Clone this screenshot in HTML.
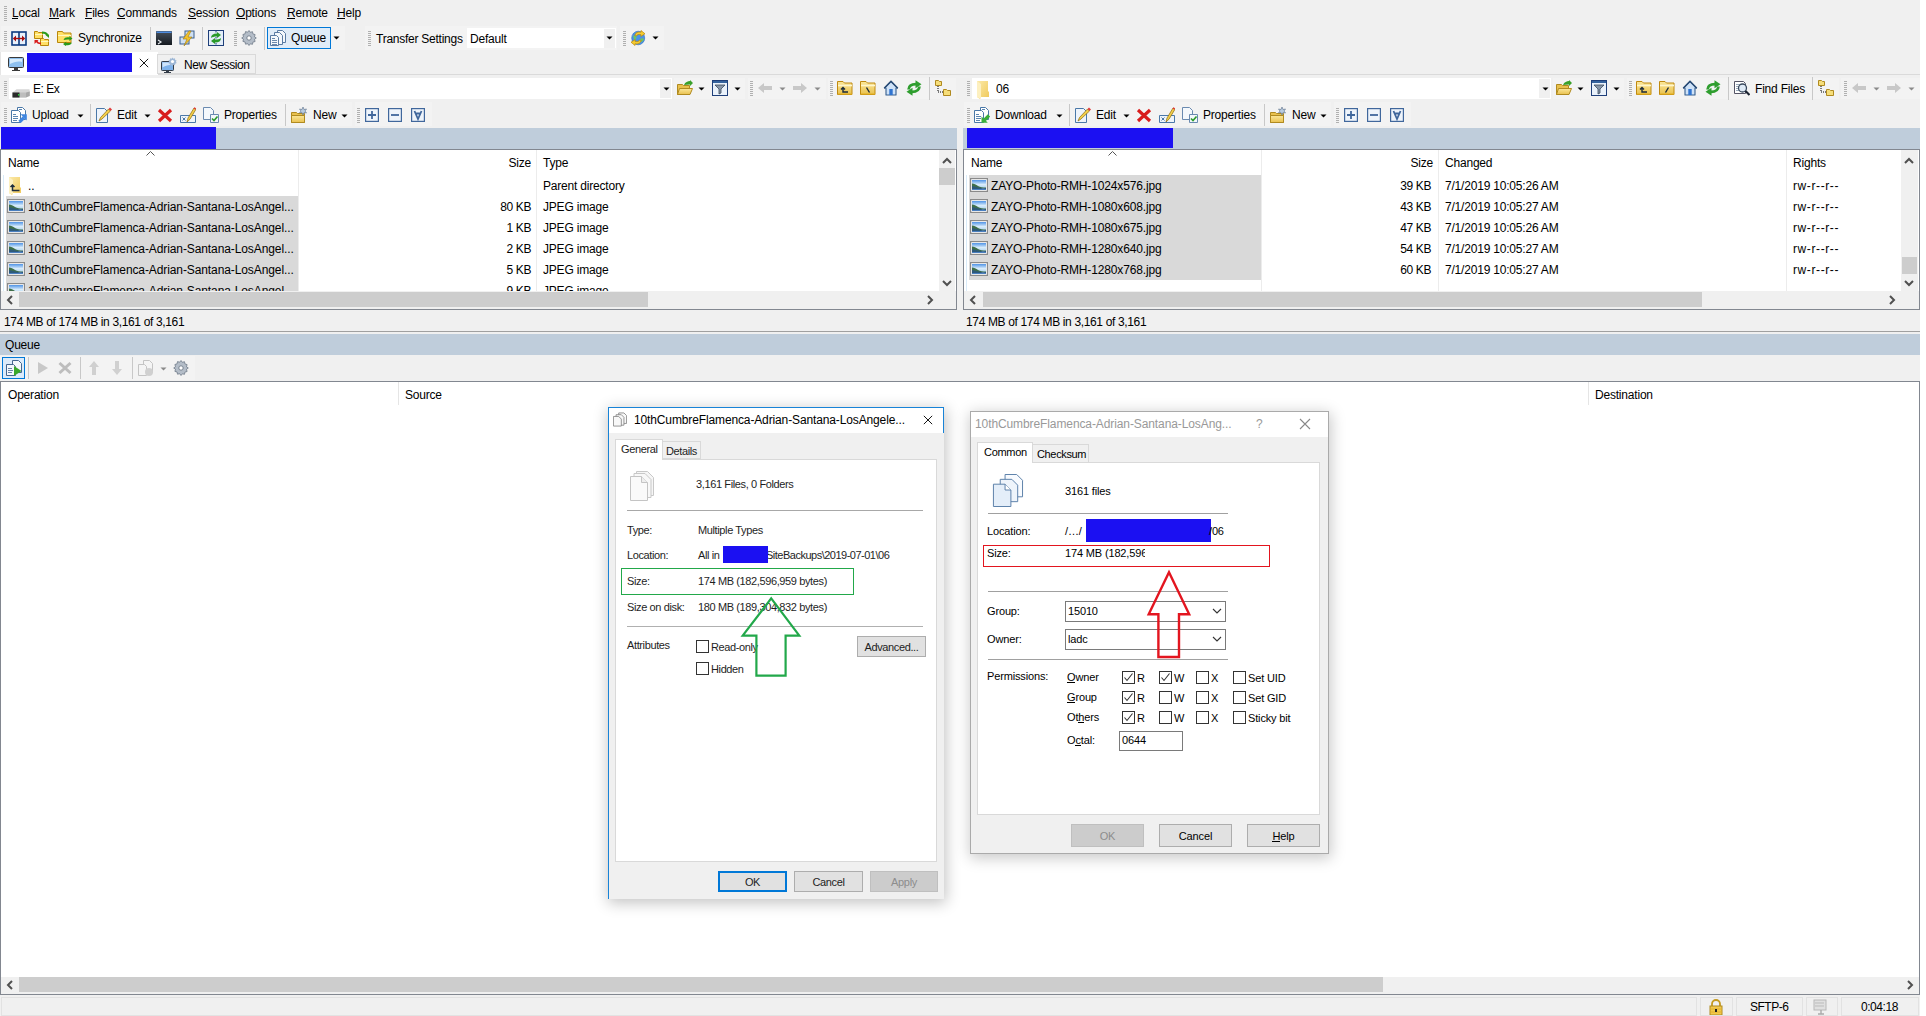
<!DOCTYPE html>
<html><head><meta charset="utf-8"><title>WinSCP</title>
<style>
html,body{margin:0;padding:0;}
body{width:1926px;height:1016px;position:relative;overflow:hidden;background:#fff;font-family:"Liberation Sans",sans-serif;font-size:12px;color:#000;}
.a{position:absolute;}
.t{position:absolute;white-space:nowrap;line-height:14px;}
u{text-decoration:none;border-bottom:1px solid currentColor;line-height:10px;display:inline-block;}
svg.a{overflow:visible;}
</style></head><body>
<svg width="0" height="0" style="position:absolute">
<defs>
<linearGradient id="gy" x1="0" y1="0" x2="0" y2="1"><stop offset="0" stop-color="#fbe79a"/><stop offset="1" stop-color="#e9c14e"/></linearGradient>
<linearGradient id="uf" x1="0" y1="0" x2="1" y2="1"><stop offset="0" stop-color="#fbe9a8"/><stop offset="1" stop-color="#f0c95a"/></linearGradient>
<linearGradient id="sky" x1="0" y1="0" x2="0" y2="1"><stop offset="0" stop-color="#5f9fdc"/><stop offset="0.5" stop-color="#b9d6ef"/><stop offset="1" stop-color="#6f9fc7"/></linearGradient>
<symbol id="grip" viewBox="0 0 4 16"><g fill="#b0b0b0"><rect x="0" y="0" width="3" height="1"/><rect x="0" y="2" width="3" height="1"/><rect x="0" y="4" width="3" height="1"/><rect x="0" y="6" width="3" height="1"/><rect x="0" y="8" width="3" height="1"/><rect x="0" y="10" width="3" height="1"/><rect x="0" y="12" width="3" height="1"/><rect x="0" y="14" width="3" height="1"/></g></symbol>
<symbol id="darr" viewBox="0 0 7 4"><path d="M0.5 0.5h6L3.5 3.5z" fill="#000"/></symbol>
<symbol id="darrg" viewBox="0 0 7 4"><path d="M0.5 0.5h6L3.5 3.5z" fill="#8a8a8a"/></symbol>
<symbol id="fold" viewBox="0 0 16 16"><path d="M1 3h5l1 1.5h7.5v9.5h-13.5z" fill="url(#gy)" stroke="#c8a233"/><path d="M1.5 6h13" stroke="#fff6c8"/></symbol>
<symbol id="img" viewBox="0 0 18 14"><rect x="0.6" y="0.6" width="16.8" height="12.8" fill="#fff" stroke="#8a8a8a" stroke-width="1.2"/><linearGradient id="sk2" x1="0" y1="0" x2="0" y2="1"><stop offset="0" stop-color="#4f93e6"/><stop offset="0.45" stop-color="#d8ecfb"/><stop offset="1" stop-color="#9ac6e8"/></linearGradient><rect x="2" y="2" width="14" height="10" fill="url(#sk2)"/><path d="M2 5.5c2 0 4 1 6 2.5s5 1.5 8 1.5V10H2z" fill="#3f6f4a"/><path d="M2 8c3 .5 6 1.5 9 2s4 0 5 0v2H2z" fill="#2e5a7a"/><path d="M2 11h14v1H2z" fill="#4a7fc0"/></symbol>
<symbol id="cmp" viewBox="0 0 16 16"><rect x="1" y="2" width="14" height="13" fill="#e8f1fb" stroke="#0c3a80" stroke-width="1.6"/><path d="M8 2v13" stroke="#0c3a80" stroke-width="1.6"/><path d="M2.5 8.5h11" stroke="#a80c0c" stroke-width="1.4"/><path d="M2 8.5l3-3v6zM14 8.5l-3-3v6z" fill="#a80c0c"/></symbol>
<symbol id="syncf" viewBox="0 0 16 16"><path d="M0.5 1.5h3l1 1h4v6h-8z" fill="#ffe066" stroke="#b8860b"/><path d="M1 4.5h7.5" stroke="#fff8c0"/><path d="M6.5 8.5h3l1 1h4v6h-8z" fill="#ffe066" stroke="#b8860b"/><path d="M7 11.5h7.5" stroke="#fff8c0"/><path d="M8 2.5c3 0 4.5 .5 5.5 2.5" stroke="#2a9a1a" stroke-width="1.8" fill="none"/><path d="M11 4.5h4V8z" fill="#2a9a1a"/><path d="M7 13.5c-2.5 0-4-1-4.5-2.5" stroke="#d81a1a" stroke-width="1.6" fill="none"/><path d="M0.5 14V10h4z" fill="#d81a1a"/></symbol>
<symbol id="syncg" viewBox="0 0 16 16"><path d="M0.5 1.5h5l1 1.5h7.5v9.5h-13.5z" fill="#ffe066" stroke="#b8860b"/><path d="M1 5.5h13" stroke="#fff8c0"/><path d="M6.5 10c1-2.5 3-3 6-2.5l-.5-1.5 3.5 2.5-3.5 2.5.5-1.5c-2.5-.3-4.5 0-6 .5z" fill="#2a9a1a"/><path d="M15 12.5c-1 2.5-3 3-6 2.5l.5 1.5L6 14l3.5-2.5-.5 1.5c2.5.3 4.5 0 6-.5z" fill="#2a9a1a"/></symbol>
<symbol id="term" viewBox="0 0 16 16"><linearGradient id="tg" x1="0" y1="0" x2="0" y2="1"><stop offset="0" stop-color="#48525e"/><stop offset="1" stop-color="#151a20"/></linearGradient><rect x="0" y="1" width="16" height="14" rx="0.6" fill="url(#tg)"/><rect x="0.5" y="1.5" width="15" height="1.5" fill="#4d8ce0"/><path d="M2 10l3 2-3 2" stroke="#e8ecf0" stroke-width="1.2" fill="none"/></symbol>
<symbol id="putty" viewBox="0 0 16 16"><rect x="1" y="7" width="9" height="7" fill="#cfe0f2" stroke="#3a5f8f"/><rect x="6" y="1" width="9" height="7" fill="#cfe0f2" stroke="#3a5f8f"/><path d="M10 1L4 9h4l-3 7 8-9H9l3-6z" fill="#f2c22b" stroke="#a07a10" stroke-width="0.6"/></symbol>
<symbol id="refrb" viewBox="0 0 16 16"><rect x="0.5" y="0.5" width="15" height="15" fill="#e4eef9" stroke="#1f3f7a"/><path d="M8 1v14" stroke="#1f3f7a" stroke-dasharray="1.5 1.5"/><path d="M3 8c0-3 2-4.5 6-4.5V2l4 3-4 3V6.5c-3 0-4.5 .5-6 1.5z" fill="#2a9a2a"/><path d="M13 8c0 3-2 4.5-6 4.5V14l-4-3 4-3v1.5c3 0 4.5-.5 6-1.5z" fill="#2a9a2a"/></symbol>
<symbol id="gear" viewBox="0 0 16 16"><path d="M8 0.5l1.3 1.8 2.2-.6.4 2.2 2.2.7-.6 2.2 1.8 1.2-1.8 1.3.6 2.2-2.2.6-.4 2.2-2.2-.5L8 15.5l-1.3-1.8-2.2.5-.4-2.2-2.2-.6.6-2.2L.7 8l1.8-1.3-.6-2.2 2.2-.7.4-2.2 2.2.6z" fill="#b4bdc8" stroke="#6f7a88" stroke-width="0.8"/><circle cx="8" cy="8" r="2.2" fill="#fff" stroke="#6f7a88" stroke-width="0.9"/></symbol>
<symbol id="queue" viewBox="0 0 16 16"><path d="M7.5 0.5h5l3 3v9h-8z" fill="#f4f8fc" stroke="#5a7ba3"/><path d="M4.5 2.5h5l3 3v9h-8z" fill="#f4f8fc" stroke="#5a7ba3"/><path d="M0.5 5.5h6l2 2v8h-8z" fill="#f4f8fc" stroke="#5a7ba3"/><path d="M2 8.5h3M2 10.5h5M2 12.5h5M2 14.5h5" stroke="#5a7ba3" stroke-width="0.9"/></symbol>
<symbol id="globe" viewBox="0 0 16 16"><ellipse cx="8.2" cy="8" rx="6.5" ry="6.8" fill="#4b93e8" stroke="#2a6cc0" stroke-width="0.6"/><path d="M3 6c1.5-1 3-.5 3.5 1s-1 2.5-2 3M10 9c1-1 3-1 4 0-.5 2-2 3-3 3" fill="#6cc46c"/><path d="M4.8 5.5C5.5 2.5 8 1.5 11 2.2v-1.7l4 3.3-4.2 2.6V4.6C8.7 4.2 7 4.5 6.5 6z" fill="#f6cc30" stroke="#b8860b" stroke-width="0.7"/><path d="M11.2 10.5C10.5 13.5 8 14.5 5 13.8v1.7L1 12.2l4.2-2.6v1.8c2.1.4 3.8.1 4.3-1.4z" fill="#f6cc30" stroke="#b8860b" stroke-width="0.7"/></symbol>
<symbol id="monitor" viewBox="0 0 16 16"><rect x="0.5" y="1.5" width="15" height="10" rx="1" fill="#8fc0ee" stroke="#3a3a3a"/><path d="M2 3h12v3C10 5 6 6 2 8z" fill="#d7ebfb"/><rect x="6" y="12" width="4" height="2" fill="#3a3a3a"/><rect x="4" y="14" width="8" height="1" fill="#3a3a3a"/></symbol>
<symbol id="newsess" viewBox="0 0 16 16"><rect x="0.5" y="4.5" width="12" height="9" rx="0.8" fill="#7fb2ea" stroke="#333c48"/><path d="M1.5 5.5h10v3c-3-1-7 0-10 2z" fill="#cfe4fa"/><rect x="5" y="13.5" width="3" height="1.5" fill="#333c48"/><rect x="3" y="15" width="7" height="1" fill="#333c48"/><path d="M11.5 0.5l1 1.3 1.5-.5.2 1.6 1.5.6-.8 1.3.8 1.3-1.5.6-.2 1.6-1.5-.5-1 1.3-1-1.3-1.5.5-.2-1.6-1.5-.6.8-1.3-.8-1.3 1.5-.6.2-1.6 1.5.5z" fill="#9fb8d6"/><circle cx="11.5" cy="4.5" r="1.6" fill="#fff"/></symbol>
<symbol id="drive" viewBox="0 0 18 10"><path d="M0.5 4.5L4.5 1.2h13l0.3 3.3L14 9.5H0.5z" fill="#d6d6d6"/><path d="M0.5 4.5h13.5v5H0.5z" fill="#bdbdbd"/><path d="M14 4.5l3.8-1v4.5L14 9.5z" fill="#a8a8a8"/><path d="M0.5 4.5h7v5h-7z" fill="#2a2a2a"/><rect x="6" y="6" width="1.6" height="1.6" fill="#2ecc40"/></symbol>
<symbol id="openf" viewBox="0 0 16 16"><path d="M0.5 4.5h5l1 1h6v9h-12z" fill="#e9c14e" stroke="#b08a20"/><path d="M2.5 8.5h13l-2.5 6h-12.5z" fill="url(#gy)" stroke="#b08a20"/><path d="M7 5c1-3 4-4 6-4v-1l3 3-3 3v-1.5c-2 0-4 .5-6 .5z" fill="#3aa02a"/></symbol>
<symbol id="filter" viewBox="0 0 16 16"><rect x="0.5" y="0.5" width="15" height="15" fill="#eaf2fb" stroke="#1f3f7a"/><rect x="1" y="1" width="14" height="2" fill="#35639d"/><path d="M3 5h10l-4 4v4l-2 1V9z" fill="#8796a8" stroke="#3a4a5e" stroke-width="0.8"/></symbol>
<symbol id="back" viewBox="0 0 16 16"><path d="M1 8l6-5v3h8v4H7v3z" fill="#c8c8c8"/></symbol>
<symbol id="fwd" viewBox="0 0 16 16"><path d="M15 8l-6-5v3H1v4h8v3z" fill="#c8c8c8"/></symbol>
<symbol id="parent" viewBox="0 0 16 16"><path d="M0.5 1.5h5.5l1.5 1.5h7.5v11.5h-14.5z" fill="url(#gy)" stroke="#c08a10"/><path d="M1 5.5h14" stroke="#fff6cc" stroke-width="1.6"/><path d="M1 14h14" stroke="#e3b020"/><path d="M4 9.5l2-2 2 2M6 8v4h5" stroke="#1c2b3a" stroke-width="1.4" fill="none"/></symbol>
<symbol id="root" viewBox="0 0 16 16"><path d="M0.5 1.5h5.5l1.5 1.5h7.5v11.5h-14.5z" fill="url(#gy)" stroke="#c08a10"/><path d="M1 5.5h14" stroke="#fff6cc" stroke-width="1.6"/><path d="M1 14h14" stroke="#e3b020"/><path d="M6.5 7.5l3 5" stroke="#1c2b3a" stroke-width="1.4"/></symbol>
<symbol id="rootr" viewBox="0 0 16 16"><path d="M0.5 1.5h5.5l1.5 1.5h7.5v11.5h-14.5z" fill="url(#gy)" stroke="#c08a10"/><path d="M1 5.5h14" stroke="#fff6cc" stroke-width="1.6"/><path d="M1 14h14" stroke="#e3b020"/><path d="M9.5 7.5l-3 5" stroke="#1c2b3a" stroke-width="1.4"/></symbol>
<symbol id="home" viewBox="0 0 16 16"><path d="M8 1.5L1.5 8h1.5v7h10V8h1.5z" fill="#cfe2f7" stroke="#355e8f" stroke-width="1.1" stroke-linejoin="round"/><path d="M1.2 8.2L8 1.3l6.8 6.9" stroke="#2b4c75" stroke-width="1.4" fill="none"/><rect x="6.3" y="9" width="3.4" height="6" fill="#2f74d0"/></symbol>
<symbol id="refresh" viewBox="0 0 16 16"><path d="M2.6 9.5C2.8 5.5 5.5 4.2 10 4.2" stroke="#2f9e2f" stroke-width="2.8" fill="none"/><path d="M9.5 0.3L15.5 4.2 9.5 8.2z" fill="#2f9e2f"/><path d="M13.4 6.5C13.2 10.5 10.5 11.8 6 11.8" stroke="#2f9e2f" stroke-width="2.8" fill="none"/><path d="M6.5 7.8L0.5 11.8 6.5 15.7z" fill="#2f9e2f"/></symbol>
<symbol id="tree" viewBox="0 0 16 16"><path d="M0.5 0.5h3l1 1h2v4h-6z" fill="#f6de7a" stroke="#b08a20"/><path d="M8.5 9.5h3l1 1h3v5h-7z" fill="#f6de7a" stroke="#b08a20"/><path d="M3 6v6h5" stroke="#000" stroke-dasharray="1 1" fill="none"/></symbol>
<symbol id="upload" viewBox="0 0 16 16"><path d="M6.5 0.5h5l3 3v9h-8z" fill="#fff" stroke="#4a78a8"/><path d="M0.5 3.5h7l2 2v10h-9z" fill="#fff" stroke="#4a78a8"/><path d="M2 7.5h3M2 9.5h5M2 11.5h5M2 13.5h4M8 2.5h3" stroke="#4a78a8" stroke-width="0.9"/><path d="M8.5 15l4.5-4.5" stroke="#3f86e0" stroke-width="3.2"/><path d="M15.8 7.2v6.3L9.5 7.2z" fill="#3f86e0"/></symbol>
<symbol id="download" viewBox="0 0 16 16"><path d="M6.5 0.5h5l3 3v9h-8z" fill="#fff" stroke="#4a78a8"/><path d="M0.5 3.5h7l2 2v10h-9z" fill="#fff" stroke="#4a78a8"/><path d="M2 7.5h3M2 9.5h5M2 11.5h5M2 13.5h4M8 2.5h3" stroke="#4a78a8" stroke-width="0.9"/><path d="M15 8.5l-4.5 4.5" stroke="#3aae3a" stroke-width="3.2"/><path d="M7.5 15.8V9.5l6.3 6.3z" fill="#3aae3a"/></symbol>
<symbol id="edit" viewBox="0 0 16 16"><path d="M0.5 1.5h8l3 3v11h-11z" fill="#eef4fb" stroke="#4a78a8"/><path d="M3 14l1.5-3.5 8-8.5 2 2-8.5 8z" fill="#f3cf4a" stroke="#8a6a10" stroke-width="0.7"/><path d="M12.5 2l1.5-1.5 2 2-1.5 1.5z" fill="#e03a3a"/></symbol>
<symbol id="del" viewBox="0 0 16 16"><path d="M2 3l12 11M14 3L2 14" stroke="#d81c1c" stroke-width="3.2"/></symbol>
<symbol id="rename" viewBox="0 0 16 16"><path d="M0.5 8.5h15v7h-15z" fill="#eef4fb" stroke="#4a78a8"/><path d="M2.5 10.5l3 3M5.5 10.5l-3 3" stroke="#4a78a8"/><path d="M7 15l1-4 6-10 2 1.2-6 10z" fill="#f3cf4a" stroke="#8a6a10" stroke-width="0.7"/><path d="M13.5 1.5l1-1.2 1.6 1-0.7 1.4z" fill="#e03a3a"/></symbol>
<symbol id="props" viewBox="0 0 16 16"><path d="M0.5 0.5h7l3 3v9h-10z" fill="#f4f8fc" stroke="#6a8ab0"/><path d="M7.5 7.5h8v8h-8z" fill="#f4f8fc" stroke="#6a8ab0"/><path d="M9 11.5l2 2 3.5-4" stroke="#2a9a2a" stroke-width="1.6" fill="none"/></symbol>
<symbol id="newf" viewBox="0 0 16 16"><path d="M0.5 5.5h5l1 1h7v9h-13z" fill="#e9c14e" stroke="#b08a20"/><path d="M0.5 8.5h13v7h-13z" fill="url(#gy)" stroke="#b08a20"/><path d="M12 0l1 2.5 2.5-.5-1.5 2 1.5 2-2.5-.5-1 2.5-1-2.5-2.5.5 1.5-2-1.5-2 2.5.5z" fill="#b9cce0" stroke="#5a6f88" stroke-width="0.6"/></symbol>
<symbol id="plusb" viewBox="0 0 14 14"><rect x="0.6" y="0.6" width="12.8" height="12.8" fill="#eef4fb" stroke="#40679c" stroke-width="1.2"/><path d="M7 3v8M3 7h8" stroke="#40679c" stroke-width="1.8"/></symbol>
<symbol id="minusb" viewBox="0 0 14 14"><rect x="0.6" y="0.6" width="12.8" height="12.8" fill="#eef4fb" stroke="#40679c" stroke-width="1.2"/><path d="M3 7h8" stroke="#40679c" stroke-width="1.8"/></symbol>
<symbol id="filtb" viewBox="0 0 14 14"><rect x="0.6" y="0.6" width="12.8" height="12.8" fill="#eef4fb" stroke="#40679c" stroke-width="1.2"/><path d="M3.5 3l3.5 8 3.5-8M4.8 5.5h4.4" stroke="#40679c" stroke-width="1.8" fill="none"/></symbol>
<symbol id="find" viewBox="0 0 16 16"><path d="M0.5 1.5h9l2 2v10h-11z" fill="#fff" stroke="#556"/><path d="M2 4.5h5M2 6.5h4M2 8.5h3M2 10.5h3" stroke="#9ab"/><circle cx="8.5" cy="8" r="4" fill="#dfeaf6" stroke="#3a4a5e" stroke-width="1.3"/><path d="M11.5 11l4 4" stroke="#1a2330" stroke-width="2.2"/></symbol>
<symbol id="w10fold" viewBox="0 0 13 18"><path d="M0 0h11v10l1 1v5H3v2l-3-2z" fill="url(#uf)"/><path d="M0 0l4 3v15l-4-2z" fill="#fdf0c0"/></symbol>
<symbol id="upfold" viewBox="0 0 13 18"><path d="M0 0h11v10l1 1v5H3v2l-3-2z" fill="url(#uf)"/><path d="M0 0l4 3v15l-4-2z" fill="#fdf0c0"/><path d="M1.5 10l2-2 2 2M3.5 8.5v5h7" stroke="#1f2d3d" stroke-width="1.5" fill="none"/></symbol>
<symbol id="qexec" viewBox="0 0 16 16"><path d="M6.5 0.5h6l3 3v9h-9z" fill="#f4f8fc" stroke="#47678f"/><path d="M0.5 4.5h7l2 2v9h-9z" fill="#f4f8fc" stroke="#47678f"/><path d="M2 8.5h4M2 10.5h5M2 12.5h4" stroke="#47678f" stroke-width="0.8"/><path d="M8 6l7.5 5L8 16z" fill="#3aa82a"/></symbol>
<symbol id="play" viewBox="0 0 16 16"><path d="M4 2l10 6-10 6z" fill="#c8c8c8"/></symbol>
<symbol id="qx" viewBox="0 0 16 16"><path d="M2.5 3l11 10M13.5 3l-11 10" stroke="#bdbdbd" stroke-width="3"/></symbol>
<symbol id="qup" viewBox="0 0 16 16"><path d="M8 1l5 6H10v8H6V7H3z" fill="#d0d0d0"/></symbol>
<symbol id="qdn" viewBox="0 0 16 16"><path d="M8 15l5-6H10V1H6v8H3z" fill="#d0d0d0"/></symbol>
<symbol id="qdoc" viewBox="0 0 16 16"><path d="M5.5 0.5h6l3 3v9h-9z" fill="#f4f4f4" stroke="#c4c4c4"/><path d="M0.5 4.5h6l2 2v9h-8z" fill="#f4f4f4" stroke="#c4c4c4"/><circle cx="11" cy="12" r="4" fill="#d0d0d0"/></symbol>
<symbol id="lock" viewBox="0 0 16 16"><path d="M4 7V5a4 4 0 0 1 8 0v2" stroke="#c49a20" stroke-width="1.8" fill="none"/><rect x="2" y="7" width="12" height="9" fill="#f2c94c" stroke="#b08a20"/><path d="M2 10h12M2 13h12" stroke="#e0b030"/><rect x="7" y="10" width="2" height="3" fill="#222"/></symbol>
<symbol id="sicon" viewBox="0 0 16 16"><rect x="1" y="1" width="12" height="10" fill="#e0e0e0" stroke="#b8b8b8"/><path d="M2 4h9M2 7h9" stroke="#bbb"/><path d="M8 11v4M5 15h6" stroke="#aaa" stroke-width="1.4"/></symbol>
<symbol id="chk" viewBox="0 0 13 13"><rect x="0.5" y="0.5" width="12" height="12" fill="#fff" stroke="#333"/></symbol>
<symbol id="chkd" viewBox="0 0 13 13"><rect x="0.5" y="0.5" width="12" height="12" fill="#fff" stroke="#333"/><path d="M2.5 6.5l2.5 3 5.5-7" stroke="#333" stroke-width="1.1" fill="none"/></symbol>
<symbol id="files3" viewBox="0 0 34 34"><path d="M14.5 0.5h12l6 6v17h-18z" fill="#f8fbff" stroke="#5a7fa8"/><path d="M9.5 5.5h12l6 6v17h-18z" fill="#eef4fb" stroke="#5a7fa8"/><path d="M2.5 10.5h12l6 6v17h-18z" fill="#e4eef9" stroke="#5a7fa8"/><path d="M14.5 10.5v6h6" fill="#fff" stroke="#5a7fa8"/></symbol>
<symbol id="files3g" viewBox="0 0 24 30"><path d="M6.5 0.5h11l6 6v18h-17z" fill="#f6f6f6" stroke="#c8c8c8"/><path d="M4 2.5h11l6 6v18H4z" fill="#f8f8f8" stroke="#c8c8c8"/><path d="M0.5 5.5h11l6 6v18h-17z" fill="#fafafa" stroke="#c4c4c4"/><path d="M11.5 5.5v6h6" fill="#eee" stroke="#c4c4c4"/></symbol>
<symbol id="dlgico" viewBox="0 0 16 16"><path d="M6.5 0.5h6l3 3v9h-9z" fill="#f8f8f8" stroke="#888"/><path d="M3.5 2.5h6l3 3v9h-9z" fill="#f8f8f8" stroke="#888"/><path d="M0.5 4.5h6l3 3v8h-9z" fill="#f8f8f8" stroke="#888"/></symbol>
<symbol id="xclose" viewBox="0 0 12 12"><path d="M1 1l10 10M11 1L1 11" stroke="#000" stroke-width="1.1"/></symbol>
<symbol id="chevd" viewBox="0 0 10 6"><path d="M1 1l4 4 4-4" stroke="#333" stroke-width="1.1" fill="none"/></symbol>
<symbol id="sarrL" viewBox="0 0 8 10"><path d="M6 1L2 5l4 4" stroke="#505050" stroke-width="2" fill="none"/></symbol>
<symbol id="sarrR" viewBox="0 0 8 10"><path d="M2 1l4 4-4 4" stroke="#505050" stroke-width="2" fill="none"/></symbol>
<symbol id="sarrU" viewBox="0 0 10 8"><path d="M1 6l4-4 4 4" stroke="#505050" stroke-width="2" fill="none"/></symbol>
<symbol id="sarrD" viewBox="0 0 10 8"><path d="M1 2l4 4 4-4" stroke="#505050" stroke-width="2" fill="none"/></symbol>
<symbol id="sortup" viewBox="0 0 9 5"><path d="M0.5 4.5l4-4 4 4" stroke="#555" fill="none"/></symbol>
</defs></svg>
<div class="a" style="left:0px;top:0px;width:1920px;height:1016px;background:#f0f0f0;"></div>
<svg class="a" style="left:4px;top:6px" width="4" height="16"><use href="#grip"/></svg>
<div class="t" style="left:12px;top:6px;font-size:12px;color:#000;letter-spacing:-0.2px;"><u>L</u>ocal</div>
<div class="t" style="left:49px;top:6px;font-size:12px;color:#000;letter-spacing:-0.2px;"><u>M</u>ark</div>
<div class="t" style="left:85px;top:6px;font-size:12px;color:#000;letter-spacing:-0.2px;"><u>F</u>iles</div>
<div class="t" style="left:117px;top:6px;font-size:12px;color:#000;letter-spacing:-0.2px;"><u>C</u>ommands</div>
<div class="t" style="left:188px;top:6px;font-size:12px;color:#000;letter-spacing:-0.2px;"><u>S</u>ession</div>
<div class="t" style="left:236px;top:6px;font-size:12px;color:#000;letter-spacing:-0.2px;"><u>O</u>ptions</div>
<div class="t" style="left:287px;top:6px;font-size:12px;color:#000;letter-spacing:-0.2px;"><u>R</u>emote</div>
<div class="t" style="left:337px;top:6px;font-size:12px;color:#000;letter-spacing:-0.2px;"><u>H</u>elp</div>
<div class="a" style="left:1px;top:26px;width:344px;height:24px;background:#f3f3f3;"></div>
<svg class="a" style="left:4px;top:31px" width="4" height="16"><use href="#grip"/></svg>
<svg class="a" style="left:11px;top:30px" width="16" height="16"><use href="#cmp"/></svg>
<svg class="a" style="left:34px;top:30px" width="16" height="16"><use href="#syncf"/></svg>
<svg class="a" style="left:57px;top:30px" width="16" height="16"><use href="#syncg"/></svg>
<div class="t" style="left:78px;top:31px;font-size:12px;color:#000;letter-spacing:-0.2px;">Synchronize</div>
<div class="a" style="left:150px;top:27px;width:1px;height:23px;background:#c8c8c8;"></div>
<svg class="a" style="left:156px;top:30px" width="16" height="16"><use href="#term"/></svg>
<svg class="a" style="left:179px;top:30px" width="16" height="16"><use href="#putty"/></svg>
<div class="a" style="left:202px;top:27px;width:1px;height:23px;background:#c8c8c8;"></div>
<svg class="a" style="left:208px;top:30px" width="16" height="16"><use href="#refrb"/></svg>
<svg class="a" style="left:234px;top:31px" width="4" height="16"><use href="#grip"/></svg>
<svg class="a" style="left:241px;top:30px" width="16" height="16"><use href="#gear"/></svg>
<div class="a" style="left:264px;top:27px;width:1px;height:23px;background:#c8c8c8;"></div>
<div class="a" style="left:267px;top:27px;width:64px;height:22px;background:#e0ecf8;border:1px solid #0078d7;box-sizing:border-box;"></div>
<svg class="a" style="left:270px;top:30px" width="16" height="16"><use href="#queue"/></svg>
<div class="t" style="left:291px;top:31px;font-size:12px;color:#000;letter-spacing:-0.2px;">Queue</div>
<svg class="a" style="left:333px;top:36px" width="7" height="4"><use href="#darr"/></svg>
<div class="a" style="left:365px;top:26px;width:252px;height:24px;background:#f3f3f3;"></div>
<svg class="a" style="left:368px;top:31px" width="4" height="16"><use href="#grip"/></svg>
<div class="t" style="left:376px;top:32px;font-size:12px;color:#000;letter-spacing:-0.25px;">Transfer Settings</div>
<div class="a" style="left:467px;top:28px;width:149px;height:20px;background:#fff;"></div>
<div class="a" style="left:604px;top:29px;width:11px;height:19px;background:#f0f0f0;"></div>
<div class="t" style="left:470px;top:32px;font-size:12px;color:#000;letter-spacing:-0.2px;">Default</div>
<svg class="a" style="left:606px;top:36px" width="7" height="4"><use href="#darr"/></svg>
<div class="a" style="left:620px;top:26px;width:44px;height:24px;background:#f3f3f3;"></div>
<svg class="a" style="left:623px;top:31px" width="4" height="16"><use href="#grip"/></svg>
<svg class="a" style="left:630px;top:30px" width="16" height="16"><use href="#globe"/></svg>
<svg class="a" style="left:652px;top:36px" width="7" height="4"><use href="#darr"/></svg>
<div class="a" style="left:0px;top:74px;width:1920px;height:1px;background:#dadada;"></div>
<div class="a" style="left:1px;top:52px;width:157px;height:23px;background:#fff;"></div>
<div class="a" style="left:0px;top:52px;width:1px;height:23px;background:#e5e5e5;"></div>
<svg class="a" style="left:8px;top:56px" width="16" height="16"><use href="#monitor"/></svg>
<div class="a" style="left:27px;top:53px;width:105px;height:19px;background:#1a0ff0;"></div>
<svg class="a" style="left:139px;top:58px" width="10" height="10"><use href="#xclose"/></svg>
<div class="a" style="left:157px;top:54px;width:99px;height:20px;background:#f0f0f0;border:1px solid #d9d9d9;box-sizing:border-box;"></div>
<svg class="a" style="left:161px;top:57px" width="16" height="16"><use href="#newsess"/></svg>
<div class="t" style="left:184px;top:58px;font-size:12px;color:#000;letter-spacing:-0.4px;">New Session</div>
<svg class="a" style="left:4px;top:81px" width="4" height="16"><use href="#grip"/></svg>
<div class="a" style="left:9px;top:78px;width:663px;height:21px;background:#fff;"></div>
<div class="a" style="left:660px;top:79px;width:11px;height:19px;background:#f0f0f0;"></div>
<svg class="a" style="left:12px;top:88px" width="18" height="10"><use href="#drive"/></svg>
<div class="t" style="left:33px;top:82px;font-size:12px;color:#000;letter-spacing:-0.5px;">E: Ex</div>
<svg class="a" style="left:663px;top:87px" width="7" height="4"><use href="#darr"/></svg>
<div class="a" style="left:674px;top:78px;width:71px;height:21px;background:#f3f3f3;"></div>
<svg class="a" style="left:677px;top:80px" width="16" height="16"><use href="#openf"/></svg>
<svg class="a" style="left:698px;top:87px" width="7" height="4"><use href="#darr"/></svg>
<svg class="a" style="left:712px;top:80px" width="16" height="16"><use href="#filter"/></svg>
<svg class="a" style="left:734px;top:87px" width="7" height="4"><use href="#darr"/></svg>
<div class="a" style="left:748px;top:78px;width:78px;height:21px;background:#f3f3f3;"></div>
<svg class="a" style="left:750px;top:81px" width="4" height="16"><use href="#grip"/></svg>
<svg class="a" style="left:757px;top:80px" width="16" height="16"><use href="#back"/></svg>
<svg class="a" style="left:779px;top:87px" width="7" height="4"><use href="#darrg"/></svg>
<svg class="a" style="left:792px;top:80px" width="16" height="16"><use href="#fwd"/></svg>
<svg class="a" style="left:814px;top:87px" width="7" height="4"><use href="#darrg"/></svg>
<div class="a" style="left:828px;top:78px;width:128px;height:21px;background:#f3f3f3;"></div>
<svg class="a" style="left:830px;top:81px" width="4" height="16"><use href="#grip"/></svg>
<svg class="a" style="left:837px;top:80px" width="16" height="16"><use href="#parent"/></svg>
<svg class="a" style="left:860px;top:80px" width="16" height="16"><use href="#root"/></svg>
<svg class="a" style="left:883px;top:80px" width="16" height="16"><use href="#home"/></svg>
<svg class="a" style="left:906px;top:80px" width="16" height="16"><use href="#refresh"/></svg>
<div class="a" style="left:929px;top:77px;width:1px;height:23px;background:#c8c8c8;"></div>
<svg class="a" style="left:935px;top:80px" width="16" height="16"><use href="#tree"/></svg>
<svg class="a" style="left:967px;top:81px" width="4" height="16"><use href="#grip"/></svg>
<div class="a" style="left:972px;top:78px;width:579px;height:21px;background:#fff;"></div>
<div class="a" style="left:1539px;top:79px;width:11px;height:19px;background:#f0f0f0;"></div>
<svg class="a" style="left:977px;top:81px" width="13" height="18"><use href="#w10fold"/></svg>
<div class="t" style="left:996px;top:82px;font-size:12px;color:#000;letter-spacing:-0.2px;">06</div>
<svg class="a" style="left:1542px;top:87px" width="7" height="4"><use href="#darr"/></svg>
<div class="a" style="left:1553px;top:78px;width:71px;height:21px;background:#f3f3f3;"></div>
<svg class="a" style="left:1556px;top:80px" width="16" height="16"><use href="#openf"/></svg>
<svg class="a" style="left:1577px;top:87px" width="7" height="4"><use href="#darr"/></svg>
<svg class="a" style="left:1591px;top:80px" width="16" height="16"><use href="#filter"/></svg>
<svg class="a" style="left:1613px;top:87px" width="7" height="4"><use href="#darr"/></svg>
<div class="a" style="left:1627px;top:78px;width:212px;height:21px;background:#f3f3f3;"></div>
<svg class="a" style="left:1629px;top:81px" width="4" height="16"><use href="#grip"/></svg>
<svg class="a" style="left:1636px;top:80px" width="16" height="16"><use href="#parent"/></svg>
<svg class="a" style="left:1659px;top:80px" width="16" height="16"><use href="#rootr"/></svg>
<svg class="a" style="left:1682px;top:80px" width="16" height="16"><use href="#home"/></svg>
<svg class="a" style="left:1705px;top:80px" width="16" height="16"><use href="#refresh"/></svg>
<div class="a" style="left:1728px;top:77px;width:1px;height:23px;background:#c8c8c8;"></div>
<svg class="a" style="left:1734px;top:80px" width="16" height="16"><use href="#find"/></svg>
<div class="t" style="left:1755px;top:82px;font-size:12px;color:#000;letter-spacing:-0.2px;">Find Files</div>
<div class="a" style="left:1812px;top:77px;width:1px;height:23px;background:#c8c8c8;"></div>
<svg class="a" style="left:1818px;top:80px" width="16" height="16"><use href="#tree"/></svg>
<div class="a" style="left:1841px;top:78px;width:79px;height:21px;background:#f3f3f3;"></div>
<svg class="a" style="left:1844px;top:81px" width="4" height="16"><use href="#grip"/></svg>
<svg class="a" style="left:1851px;top:80px" width="16" height="16"><use href="#back"/></svg>
<svg class="a" style="left:1873px;top:87px" width="7" height="4"><use href="#darrg"/></svg>
<svg class="a" style="left:1886px;top:80px" width="16" height="16"><use href="#fwd"/></svg>
<svg class="a" style="left:1908px;top:87px" width="7" height="4"><use href="#darrg"/></svg>
<div class="a" style="left:1px;top:102px;width:351px;height:24px;background:#f3f3f3;"></div>
<svg class="a" style="left:4px;top:108px" width="4" height="16"><use href="#grip"/></svg>
<svg class="a" style="left:11px;top:107px" width="16" height="16"><use href="#upload"/></svg>
<div class="t" style="left:32px;top:108px;font-size:12px;color:#000;letter-spacing:-0.2px;">Upload</div>
<svg class="a" style="left:77px;top:114px" width="7" height="4"><use href="#darr"/></svg>
<div class="a" style="left:90px;top:104px;width:1px;height:22px;background:#c8c8c8;"></div>
<svg class="a" style="left:96px;top:107px" width="16" height="16"><use href="#edit"/></svg>
<div class="t" style="left:117px;top:108px;font-size:12px;color:#000;letter-spacing:-0.2px;">Edit</div>
<svg class="a" style="left:144px;top:114px" width="7" height="4"><use href="#darr"/></svg>
<svg class="a" style="left:157px;top:107px" width="16" height="16"><use href="#del"/></svg>
<svg class="a" style="left:180px;top:107px" width="16" height="16"><use href="#rename"/></svg>
<svg class="a" style="left:203px;top:107px" width="16" height="16"><use href="#props"/></svg>
<div class="t" style="left:224px;top:108px;font-size:12px;color:#000;letter-spacing:-0.2px;">Properties</div>
<div class="a" style="left:285px;top:104px;width:1px;height:22px;background:#c8c8c8;"></div>
<svg class="a" style="left:291px;top:107px" width="16" height="16"><use href="#newf"/></svg>
<div class="t" style="left:313px;top:108px;font-size:12px;color:#000;letter-spacing:-0.2px;">New</div>
<svg class="a" style="left:341px;top:114px" width="7" height="4"><use href="#darr"/></svg>
<div class="a" style="left:355px;top:102px;width:77px;height:24px;background:#f3f3f3;"></div>
<svg class="a" style="left:357px;top:108px" width="4" height="16"><use href="#grip"/></svg>
<svg class="a" style="left:365px;top:108px" width="14" height="14"><use href="#plusb"/></svg>
<svg class="a" style="left:388px;top:108px" width="14" height="14"><use href="#minusb"/></svg>
<svg class="a" style="left:411px;top:108px" width="14" height="14"><use href="#filtb"/></svg>
<div class="a" style="left:964px;top:102px;width:367px;height:24px;background:#f3f3f3;"></div>
<svg class="a" style="left:967px;top:108px" width="4" height="16"><use href="#grip"/></svg>
<svg class="a" style="left:974px;top:107px" width="16" height="16"><use href="#download"/></svg>
<div class="t" style="left:995px;top:108px;font-size:12px;color:#000;letter-spacing:-0.2px;">Download</div>
<svg class="a" style="left:1056px;top:114px" width="7" height="4"><use href="#darr"/></svg>
<div class="a" style="left:1069px;top:104px;width:1px;height:22px;background:#c8c8c8;"></div>
<svg class="a" style="left:1075px;top:107px" width="16" height="16"><use href="#edit"/></svg>
<div class="t" style="left:1096px;top:108px;font-size:12px;color:#000;letter-spacing:-0.2px;">Edit</div>
<svg class="a" style="left:1123px;top:114px" width="7" height="4"><use href="#darr"/></svg>
<svg class="a" style="left:1136px;top:107px" width="16" height="16"><use href="#del"/></svg>
<svg class="a" style="left:1159px;top:107px" width="16" height="16"><use href="#rename"/></svg>
<svg class="a" style="left:1182px;top:107px" width="16" height="16"><use href="#props"/></svg>
<div class="t" style="left:1203px;top:108px;font-size:12px;color:#000;letter-spacing:-0.2px;">Properties</div>
<div class="a" style="left:1264px;top:104px;width:1px;height:22px;background:#c8c8c8;"></div>
<svg class="a" style="left:1270px;top:107px" width="16" height="16"><use href="#newf"/></svg>
<div class="t" style="left:1292px;top:108px;font-size:12px;color:#000;letter-spacing:-0.2px;">New</div>
<svg class="a" style="left:1320px;top:114px" width="7" height="4"><use href="#darr"/></svg>
<div class="a" style="left:1334px;top:102px;width:77px;height:24px;background:#f3f3f3;"></div>
<svg class="a" style="left:1336px;top:108px" width="4" height="16"><use href="#grip"/></svg>
<svg class="a" style="left:1344px;top:108px" width="14" height="14"><use href="#plusb"/></svg>
<svg class="a" style="left:1367px;top:108px" width="14" height="14"><use href="#minusb"/></svg>
<svg class="a" style="left:1390px;top:108px" width="14" height="14"><use href="#filtb"/></svg>
<div class="a" style="left:1px;top:128px;width:956px;height:21px;background:#bfcddb;"></div>
<div class="a" style="left:0px;top:149px;width:957px;height:161px;background:#fff;border:1px solid #828790;box-sizing:border-box;"></div>
<div class="a" style="left:1px;top:127px;width:215px;height:22px;background:#1b10f2;"></div>
<div class="t" style="left:8px;top:156px;font-size:12px;color:#000;letter-spacing:-0.2px;">Name</div>
<svg class="a" style="left:146px;top:151px" width="9" height="5"><use href="#sortup"/></svg>
<div class="a" style="left:298px;top:150px;width:1px;height:141px;background:#ececec;"></div>
<div class="t" style="left:491px;top:156px;font-size:12px;color:#000;letter-spacing:-0.2px;width:40px;text-align:right">Size</div>
<div class="a" style="left:536px;top:150px;width:1px;height:141px;background:#ececec;"></div>
<div class="t" style="left:543px;top:156px;font-size:12px;color:#000;letter-spacing:-0.2px;">Type</div>
<div class="a" style="left:3px;top:175px;width:1px;height:116px;background:#d9ebf9;"></div>
<svg class="a" style="left:9px;top:177px" width="13" height="18"><use href="#upfold"/></svg>
<div class="t" style="left:28px;top:179px;font-size:12px;color:#000;letter-spacing:-0.2px;">..</div>
<div class="t" style="left:543px;top:179px;font-size:12px;color:#000;letter-spacing:-0.2px;">Parent directory</div>
<div class="a" style="left:6px;top:196px;width:292px;height:95px;background:#d9d9d9;"></div>
<svg class="a" style="left:7px;top:199px" width="18" height="14"><use href="#img"/></svg>
<div class="t" style="left:28px;top:200px;font-size:12px;color:#000;letter-spacing:-0.1px;">10thCumbreFlamenca-Adrian-Santana-LosAngel...</div>
<div class="t" style="left:471px;top:200px;font-size:12px;color:#000;letter-spacing:-0.4px;width:60px;text-align:right">80 KB</div>
<div class="t" style="left:543px;top:200px;font-size:12px;color:#000;letter-spacing:-0.2px;">JPEG image</div>
<svg class="a" style="left:7px;top:220px" width="18" height="14"><use href="#img"/></svg>
<div class="t" style="left:28px;top:221px;font-size:12px;color:#000;letter-spacing:-0.1px;">10thCumbreFlamenca-Adrian-Santana-LosAngel...</div>
<div class="t" style="left:471px;top:221px;font-size:12px;color:#000;letter-spacing:-0.4px;width:60px;text-align:right">1 KB</div>
<div class="t" style="left:543px;top:221px;font-size:12px;color:#000;letter-spacing:-0.2px;">JPEG image</div>
<svg class="a" style="left:7px;top:241px" width="18" height="14"><use href="#img"/></svg>
<div class="t" style="left:28px;top:242px;font-size:12px;color:#000;letter-spacing:-0.1px;">10thCumbreFlamenca-Adrian-Santana-LosAngel...</div>
<div class="t" style="left:471px;top:242px;font-size:12px;color:#000;letter-spacing:-0.4px;width:60px;text-align:right">2 KB</div>
<div class="t" style="left:543px;top:242px;font-size:12px;color:#000;letter-spacing:-0.2px;">JPEG image</div>
<svg class="a" style="left:7px;top:262px" width="18" height="14"><use href="#img"/></svg>
<div class="t" style="left:28px;top:263px;font-size:12px;color:#000;letter-spacing:-0.1px;">10thCumbreFlamenca-Adrian-Santana-LosAngel...</div>
<div class="t" style="left:471px;top:263px;font-size:12px;color:#000;letter-spacing:-0.4px;width:60px;text-align:right">5 KB</div>
<div class="t" style="left:543px;top:263px;font-size:12px;color:#000;letter-spacing:-0.2px;">JPEG image</div>
<svg class="a" style="left:7px;top:283px" width="18" height="14"><use href="#img"/></svg>
<div class="t" style="left:28px;top:284px;font-size:12px;color:#000;letter-spacing:-0.1px;">10thCumbreFlamenca-Adrian-Santana-LosAngel...</div>
<div class="t" style="left:471px;top:284px;font-size:12px;color:#000;letter-spacing:-0.4px;width:60px;text-align:right">9 KB</div>
<div class="t" style="left:543px;top:284px;font-size:12px;color:#000;letter-spacing:-0.2px;">JPEG image</div>
<div class="a" style="left:939px;top:150px;width:16px;height:141px;background:#f0f0f0;"></div>
<svg class="a" style="left:942px;top:157px" width="10" height="8"><use href="#sarrU"/></svg>
<div class="a" style="left:939px;top:168px;width:16px;height:17px;background:#cdcdcd;"></div>
<svg class="a" style="left:942px;top:279px" width="10" height="8"><use href="#sarrD"/></svg>
<div class="a" style="left:1px;top:291px;width:955px;height:18px;background:#f0f0f0;"></div>
<svg class="a" style="left:6px;top:295px" width="8" height="10"><use href="#sarrL"/></svg>
<div class="a" style="left:19px;top:292px;width:629px;height:15px;background:#cdcdcd;"></div>
<svg class="a" style="left:926px;top:295px" width="8" height="10"><use href="#sarrR"/></svg>
<div class="a" style="left:939px;top:291px;width:17px;height:18px;background:#f0f0f0;"></div>
<div class="t" style="left:4px;top:315px;font-size:12px;color:#000;letter-spacing:-0.35px;">174 MB of 174 MB in 3,161 of 3,161</div>
<div class="a" style="left:0px;top:331px;width:1920px;height:1px;background:#a0a0a0;"></div>
<div class="a" style="left:963px;top:128px;width:957px;height:21px;background:#bfcddb;"></div>
<div class="a" style="left:967px;top:128px;width:206px;height:20px;background:#1b10f2;"></div>
<div class="a" style="left:963px;top:149px;width:957px;height:161px;background:#fff;border:1px solid #828790;box-sizing:border-box;"></div>
<div class="t" style="left:971px;top:156px;font-size:12px;color:#000;letter-spacing:-0.2px;">Name</div>
<svg class="a" style="left:1108px;top:151px" width="9" height="5"><use href="#sortup"/></svg>
<div class="a" style="left:1261px;top:150px;width:1px;height:141px;background:#ececec;"></div>
<div class="t" style="left:1393px;top:156px;font-size:12px;color:#000;letter-spacing:-0.2px;width:40px;text-align:right">Size</div>
<div class="a" style="left:1438px;top:150px;width:1px;height:141px;background:#ececec;"></div>
<div class="t" style="left:1445px;top:156px;font-size:12px;color:#000;letter-spacing:-0.2px;">Changed</div>
<div class="a" style="left:1786px;top:150px;width:1px;height:141px;background:#ececec;"></div>
<div class="t" style="left:1793px;top:156px;font-size:12px;color:#000;letter-spacing:-0.2px;">Rights</div>
<div class="a" style="left:966px;top:175px;width:1px;height:116px;background:#d9ebf9;"></div>
<div class="a" style="left:969px;top:175px;width:292px;height:105px;background:#d9d9d9;"></div>
<svg class="a" style="left:970px;top:178px" width="18" height="14"><use href="#img"/></svg>
<div class="t" style="left:991px;top:179px;font-size:12px;color:#000;letter-spacing:-0.15px;">ZAYO-Photo-RMH-1024x576.jpg</div>
<div class="t" style="left:1371px;top:179px;font-size:12px;color:#000;letter-spacing:-0.4px;width:60px;text-align:right">39 KB</div>
<div class="t" style="left:1445px;top:179px;font-size:12px;color:#000;letter-spacing:-0.2px;">7/1/2019 10:05:26 AM</div>
<div class="t" style="left:1793px;top:179px;font-size:12px;color:#000;letter-spacing:0.6px;">rw-r--r--</div>
<svg class="a" style="left:970px;top:199px" width="18" height="14"><use href="#img"/></svg>
<div class="t" style="left:991px;top:200px;font-size:12px;color:#000;letter-spacing:-0.15px;">ZAYO-Photo-RMH-1080x608.jpg</div>
<div class="t" style="left:1371px;top:200px;font-size:12px;color:#000;letter-spacing:-0.4px;width:60px;text-align:right">43 KB</div>
<div class="t" style="left:1445px;top:200px;font-size:12px;color:#000;letter-spacing:-0.2px;">7/1/2019 10:05:27 AM</div>
<div class="t" style="left:1793px;top:200px;font-size:12px;color:#000;letter-spacing:0.6px;">rw-r--r--</div>
<svg class="a" style="left:970px;top:220px" width="18" height="14"><use href="#img"/></svg>
<div class="t" style="left:991px;top:221px;font-size:12px;color:#000;letter-spacing:-0.15px;">ZAYO-Photo-RMH-1080x675.jpg</div>
<div class="t" style="left:1371px;top:221px;font-size:12px;color:#000;letter-spacing:-0.4px;width:60px;text-align:right">47 KB</div>
<div class="t" style="left:1445px;top:221px;font-size:12px;color:#000;letter-spacing:-0.2px;">7/1/2019 10:05:26 AM</div>
<div class="t" style="left:1793px;top:221px;font-size:12px;color:#000;letter-spacing:0.6px;">rw-r--r--</div>
<svg class="a" style="left:970px;top:241px" width="18" height="14"><use href="#img"/></svg>
<div class="t" style="left:991px;top:242px;font-size:12px;color:#000;letter-spacing:-0.15px;">ZAYO-Photo-RMH-1280x640.jpg</div>
<div class="t" style="left:1371px;top:242px;font-size:12px;color:#000;letter-spacing:-0.4px;width:60px;text-align:right">54 KB</div>
<div class="t" style="left:1445px;top:242px;font-size:12px;color:#000;letter-spacing:-0.2px;">7/1/2019 10:05:27 AM</div>
<div class="t" style="left:1793px;top:242px;font-size:12px;color:#000;letter-spacing:0.6px;">rw-r--r--</div>
<svg class="a" style="left:970px;top:262px" width="18" height="14"><use href="#img"/></svg>
<div class="t" style="left:991px;top:263px;font-size:12px;color:#000;letter-spacing:-0.15px;">ZAYO-Photo-RMH-1280x768.jpg</div>
<div class="t" style="left:1371px;top:263px;font-size:12px;color:#000;letter-spacing:-0.4px;width:60px;text-align:right">60 KB</div>
<div class="t" style="left:1445px;top:263px;font-size:12px;color:#000;letter-spacing:-0.2px;">7/1/2019 10:05:27 AM</div>
<div class="t" style="left:1793px;top:263px;font-size:12px;color:#000;letter-spacing:0.6px;">rw-r--r--</div>
<div class="a" style="left:1901px;top:150px;width:17px;height:141px;background:#f0f0f0;"></div>
<svg class="a" style="left:1904px;top:157px" width="10" height="8"><use href="#sarrU"/></svg>
<div class="a" style="left:1902px;top:257px;width:15px;height:17px;background:#cdcdcd;"></div>
<svg class="a" style="left:1904px;top:279px" width="10" height="8"><use href="#sarrD"/></svg>
<div class="a" style="left:964px;top:291px;width:955px;height:18px;background:#f0f0f0;"></div>
<svg class="a" style="left:969px;top:295px" width="8" height="10"><use href="#sarrL"/></svg>
<div class="a" style="left:983px;top:292px;width:719px;height:15px;background:#cdcdcd;"></div>
<svg class="a" style="left:1888px;top:295px" width="8" height="10"><use href="#sarrR"/></svg>
<div class="a" style="left:1901px;top:291px;width:18px;height:18px;background:#f0f0f0;"></div>
<div class="t" style="left:966px;top:315px;font-size:12px;color:#000;letter-spacing:-0.35px;">174 MB of 174 MB in 3,161 of 3,161</div>
<div class="a" style="left:0px;top:334px;width:1920px;height:21px;background:#bfcddb;"></div>
<div class="t" style="left:5px;top:338px;font-size:12px;color:#000;letter-spacing:-0.2px;">Queue</div>
<div class="a" style="left:0px;top:356px;width:195px;height:24px;background:#f3f3f3;"></div>
<div class="a" style="left:2px;top:357px;width:23px;height:22px;background:#dcebfa;border:1px solid #0078d7;box-sizing:border-box;"></div>
<div class="a" style="left:28px;top:357px;width:1px;height:22px;background:#c8c8c8;"></div>
<svg class="a" style="left:6px;top:360px" width="16" height="16"><use href="#qexec"/></svg>
<svg class="a" style="left:34px;top:360px" width="16" height="16"><use href="#play"/></svg>
<svg class="a" style="left:57px;top:360px" width="16" height="16"><use href="#qx"/></svg>
<div class="a" style="left:80px;top:357px;width:1px;height:22px;background:#c8c8c8;"></div>
<svg class="a" style="left:86px;top:360px" width="16" height="16"><use href="#qup"/></svg>
<svg class="a" style="left:109px;top:360px" width="16" height="16"><use href="#qdn"/></svg>
<div class="a" style="left:132px;top:357px;width:1px;height:22px;background:#c8c8c8;"></div>
<svg class="a" style="left:138px;top:360px" width="16" height="16"><use href="#qdoc"/></svg>
<svg class="a" style="left:160px;top:367px" width="7" height="4"><use href="#darrg"/></svg>
<svg class="a" style="left:173px;top:360px" width="16" height="16"><use href="#gear"/></svg>
<div class="a" style="left:0px;top:381px;width:1920px;height:614px;background:#fff;border:1px solid #828790;box-sizing:border-box;"></div>
<div class="t" style="left:8px;top:388px;font-size:12px;color:#000;letter-spacing:-0.2px;">Operation</div>
<div class="a" style="left:398px;top:382px;width:1px;height:23px;background:#e5e5e5;"></div>
<div class="t" style="left:405px;top:388px;font-size:12px;color:#000;letter-spacing:-0.2px;">Source</div>
<div class="a" style="left:1588px;top:382px;width:1px;height:23px;background:#e5e5e5;"></div>
<div class="t" style="left:1595px;top:388px;font-size:12px;color:#000;letter-spacing:-0.2px;">Destination</div>
<div class="a" style="left:1px;top:977px;width:1918px;height:17px;background:#f0f0f0;"></div>
<svg class="a" style="left:6px;top:980px" width="8" height="10"><use href="#sarrL"/></svg>
<div class="a" style="left:19px;top:977px;width:1364px;height:15px;background:#cdcdcd;"></div>
<svg class="a" style="left:1906px;top:980px" width="8" height="10"><use href="#sarrR"/></svg>
<div class="a" style="left:0px;top:996px;width:1920px;height:20px;background:#f0f0f0;"></div>
<div class="a" style="left:1px;top:997px;width:1696px;height:19px;background:transparent;border:1px solid #e2e2e2;box-sizing:border-box;"></div>
<div class="a" style="left:1700px;top:997px;width:33px;height:19px;background:transparent;border:1px solid #e2e2e2;box-sizing:border-box;"></div>
<div class="a" style="left:1736px;top:997px;width:67px;height:19px;background:transparent;border:1px solid #e2e2e2;box-sizing:border-box;"></div>
<div class="a" style="left:1806px;top:997px;width:32px;height:19px;background:transparent;border:1px solid #e2e2e2;box-sizing:border-box;"></div>
<div class="a" style="left:1841px;top:997px;width:78px;height:19px;background:transparent;border:1px solid #e2e2e2;box-sizing:border-box;"></div>
<svg class="a" style="left:1708px;top:999px" width="16" height="16"><use href="#lock"/></svg>
<div class="t" style="left:1750px;top:1000px;font-size:12px;color:#000;letter-spacing:-0.5px;">SFTP-6</div>
<svg class="a" style="left:1813px;top:999px" width="16" height="16"><use href="#sicon"/></svg>
<div class="t" style="left:1861px;top:1000px;font-size:12px;color:#000;letter-spacing:-0.45px;">0:04:18</div>
<div class="a" style="left:608px;top:407px;width:336px;height:492px;background:#f0f0f0;box-shadow:1px 3px 14px 1px rgba(0,0,0,0.24);"></div>
<div class="a" style="left:608px;top:407px;width:336px;height:26px;background:#fff;"></div>
<div class="a" style="left:608px;top:407px;width:336px;height:1px;background:#1883d7;"></div>
<div class="a" style="left:608px;top:407px;width:1px;height:492px;background:#1883d7;"></div>
<div class="a" style="left:943px;top:407px;width:1px;height:26px;background:#1883d7;"></div>
<svg class="a" style="left:613px;top:412px" width="14" height="15"><use href="#dlgico"/></svg>
<div class="t" style="left:634px;top:413px;font-size:12px;color:#000;letter-spacing:-0.13px;">10thCumbreFlamenca-Adrian-Santana-LosAngele...</div>
<svg class="a" style="left:923px;top:415px" width="10" height="10"><use href="#xclose"/></svg>
<div class="a" style="left:615px;top:459px;width:322px;height:403px;background:#fff;border:1px solid #d9d9d9;box-sizing:border-box;"></div>
<div class="a" style="left:662px;top:441px;width:39px;height:18px;background:#f0f0f0;border:1px solid #d9d9d9;box-sizing:border-box;"></div>
<div class="a" style="left:615px;top:439px;width:48px;height:21px;background:#fff;border:1px solid #d9d9d9;box-sizing:border-box;"></div>
<div class="a" style="left:616px;top:459px;width:46px;height:2px;background:#fff;"></div>
<div class="t" style="left:621px;top:441.5px;font-size:11px;color:#1e1e1e;letter-spacing:-0.38px;">General</div>
<div class="t" style="left:666px;top:443.5px;font-size:11px;color:#1e1e1e;letter-spacing:-0.38px;">Details</div>
<svg class="a" style="left:630px;top:471px" width="24" height="30"><use href="#files3g"/></svg>
<div class="t" style="left:696px;top:476.5px;font-size:11px;color:#1e1e1e;letter-spacing:-0.38px;">3,161 Files, 0 Folders</div>
<div class="a" style="left:627px;top:510px;width:296px;height:1px;background:#a8a8a8;"></div>
<div class="t" style="left:627px;top:522.5px;font-size:11px;color:#1e1e1e;letter-spacing:-0.38px;">Type:</div>
<div class="t" style="left:698px;top:522.5px;font-size:11px;color:#1e1e1e;letter-spacing:-0.38px;">Multiple Types</div>
<div class="t" style="left:627px;top:547.5px;font-size:11px;color:#1e1e1e;letter-spacing:-0.38px;">Location:</div>
<div class="t" style="left:698px;top:547.5px;font-size:11px;color:#1e1e1e;letter-spacing:-0.38px;">All in</div>
<div class="t" style="left:766px;top:547.5px;font-size:11px;color:#1e1e1e;letter-spacing:-0.5px;">SiteBackups\2019-07-01\06</div>
<div class="a" style="left:621px;top:568px;width:233px;height:27px;background:transparent;border:1.5px solid #22a84a;box-sizing:border-box;"></div>
<div class="a" style="left:723px;top:546px;width:45px;height:17px;background:#1b10f2;"></div>
<div class="t" style="left:627px;top:573.5px;font-size:11px;color:#1e1e1e;letter-spacing:-0.38px;">Size:</div>
<div class="t" style="left:698px;top:573.5px;font-size:11px;color:#1e1e1e;letter-spacing:-0.38px;">174 MB (182,596,959 bytes)</div>
<div class="t" style="left:627px;top:599.5px;font-size:11px;color:#1e1e1e;letter-spacing:-0.38px;">Size on disk:</div>
<div class="t" style="left:698px;top:599.5px;font-size:11px;color:#1e1e1e;letter-spacing:-0.38px;">180 MB (189,304,832 bytes)</div>
<div class="a" style="left:627px;top:626px;width:296px;height:1px;background:#b0b0b0;"></div>
<div class="t" style="left:627px;top:637.5px;font-size:11px;color:#1e1e1e;letter-spacing:-0.38px;">Attributes</div>
<svg class="a" style="left:696px;top:640px" width="13" height="13"><use href="#chk"/></svg>
<div class="t" style="left:711px;top:639.5px;font-size:11px;color:#1e1e1e;letter-spacing:-0.38px;">Read-only</div>
<svg class="a" style="left:696px;top:662px" width="13" height="13"><use href="#chk"/></svg>
<div class="t" style="left:711px;top:661.5px;font-size:11px;color:#1e1e1e;letter-spacing:-0.38px;">Hidden</div>
<div class="a" style="left:857px;top:636px;width:69px;height:21px;background:#e1e1e1;border:1px solid #adadad;box-sizing:border-box;"></div>
<div class="t" style="left:857px;top:639.5px;font-size:11px;color:#1e1e1e;letter-spacing:-0.38px;width:69px;text-align:center">Advanced...</div>
<svg class="a" style="left:600px;top:590px" width="220" height="100"><path d="M171.2 8.4L199.3 45.7H185.6V85.7H156.4V45.7H142.7Z" fill="none" stroke="#22a84a" stroke-width="2.2" stroke-linejoin="miter"/></svg>
<div class="a" style="left:718px;top:871px;width:69px;height:21px;background:#e1e1e1;border:2px solid #0078d7;box-sizing:border-box;"></div>
<div class="t" style="left:718px;top:874.5px;font-size:11px;color:#1e1e1e;letter-spacing:-0.38px;width:69px;text-align:center">OK</div>
<div class="a" style="left:794px;top:871px;width:69px;height:21px;background:#e1e1e1;border:1px solid #adadad;box-sizing:border-box;"></div>
<div class="t" style="left:794px;top:874.5px;font-size:11px;color:#1e1e1e;letter-spacing:-0.38px;width:69px;text-align:center">Cancel</div>
<div class="a" style="left:870px;top:871px;width:68px;height:21px;background:#cccccc;border:1px solid #bfbfbf;box-sizing:border-box;"></div>
<div class="t" style="left:870px;top:874.5px;font-size:11px;color:#8d8d8d;letter-spacing:-0.3px;width:68px;text-align:center">Apply</div>
<div class="a" style="left:970px;top:411px;width:359px;height:443px;background:#f0f0f0;border:1px solid #aaaaaa;box-sizing:border-box;box-shadow:1px 3px 14px 1px rgba(0,0,0,0.22);"></div>
<div class="a" style="left:971px;top:412px;width:357px;height:25px;background:#fff;"></div>
<div class="t" style="left:975px;top:417px;font-size:12px;color:#999;letter-spacing:-0.1px;">10thCumbreFlamenca-Adrian-Santana-LosAng...</div>
<div class="t" style="left:1256px;top:417px;font-size:12px;color:#999;letter-spacing:-0.2px;">?</div>
<svg class="a" style="left:1299px;top:418px" width="12" height="12"><path d="M1 1l10 10M11 1L1 11" stroke="#888" stroke-width="1.1"/></svg>
<div class="a" style="left:977px;top:462px;width:343px;height:353px;background:#fff;border:1px solid #d9d9d9;box-sizing:border-box;"></div>
<div class="a" style="left:1032px;top:444px;width:57px;height:19px;background:#f0f0f0;border:1px solid #d9d9d9;box-sizing:border-box;"></div>
<div class="a" style="left:977px;top:442px;width:56px;height:21px;background:#fff;border:1px solid #d9d9d9;box-sizing:border-box;"></div>
<div class="a" style="left:978px;top:462px;width:54px;height:2px;background:#fff;"></div>
<div class="t" style="left:984px;top:444.5px;font-size:11px;color:#000;letter-spacing:-0.3px;">Common</div>
<div class="t" style="left:1037px;top:446.5px;font-size:11px;color:#000;letter-spacing:-0.35px;">Checksum</div>
<svg class="a" style="left:991px;top:474px" width="33" height="33"><use href="#files3"/></svg>
<div class="t" style="left:1065px;top:483.5px;font-size:11px;color:#000;letter-spacing:-0.15px;">3161 files</div>
<div class="a" style="left:988px;top:513px;width:240px;height:1px;background:#a0a0a0;"></div>
<div class="t" style="left:987px;top:523.5px;font-size:11px;color:#000;letter-spacing:-0.15px;">Location:</div>
<div class="t" style="left:1065px;top:523.5px;font-size:11px;color:#000;letter-spacing:-0.15px;">/…/</div>
<div class="a" style="left:1086px;top:519px;width:125px;height:23px;background:#1b10f2;"></div>
<div class="t" style="left:1209px;top:523.5px;font-size:11px;color:#000;letter-spacing:-0.15px;">/06</div>
<div class="a" style="left:983px;top:545px;width:287px;height:22px;background:transparent;border:1.6px solid #e3151f;box-sizing:border-box;"></div>
<div class="t" style="left:987px;top:545.5px;font-size:11px;color:#000;letter-spacing:-0.15px;">Size:</div>
<div class="t" style="left:1065px;top:546px;width:80px;overflow:hidden;font-size:11px;letter-spacing:-0.15px">174 MB (182,596,959 bytes)</div>
<div class="a" style="left:988px;top:591px;width:240px;height:1px;background:#a0a0a0;"></div>
<div class="t" style="left:987px;top:603.5px;font-size:11px;color:#000;letter-spacing:-0.15px;">Group:</div>
<div class="a" style="left:1065px;top:601px;width:161px;height:21px;background:#fff;border:1px solid #7a7a7a;box-sizing:border-box;"></div>
<div class="t" style="left:1068px;top:603.5px;font-size:11px;color:#000;letter-spacing:-0.15px;">15010</div>
<svg class="a" style="left:1212px;top:608px" width="10" height="6"><use href="#chevd"/></svg>
<div class="t" style="left:987px;top:631.5px;font-size:11px;color:#000;letter-spacing:-0.15px;">Owner:</div>
<div class="a" style="left:1065px;top:629px;width:161px;height:21px;background:#fff;border:1px solid #7a7a7a;box-sizing:border-box;"></div>
<div class="t" style="left:1068px;top:631.5px;font-size:11px;color:#000;letter-spacing:-0.15px;">ladc</div>
<svg class="a" style="left:1212px;top:636px" width="10" height="6"><use href="#chevd"/></svg>
<div class="a" style="left:988px;top:659px;width:240px;height:1px;background:#a0a0a0;"></div>
<div class="t" style="left:987px;top:668.5px;font-size:11px;color:#000;letter-spacing:-0.15px;">Permissions:</div>
<div class="t" style="left:1067px;top:669.5px;font-size:11px;color:#000;letter-spacing:-0.15px;"><u>O</u>wner</div>
<svg class="a" style="left:1122px;top:671px" width="13" height="13"><use href="#chkd"/></svg>
<div class="t" style="left:1137px;top:670.5px;font-size:11px;color:#000;letter-spacing:-0.15px;">R</div>
<svg class="a" style="left:1159px;top:671px" width="13" height="13"><use href="#chkd"/></svg>
<div class="t" style="left:1174px;top:670.5px;font-size:11px;color:#000;letter-spacing:-0.15px;">W</div>
<svg class="a" style="left:1196px;top:671px" width="13" height="13"><use href="#chk"/></svg>
<div class="t" style="left:1211px;top:670.5px;font-size:11px;color:#000;letter-spacing:-0.15px;">X</div>
<svg class="a" style="left:1233px;top:671px" width="13" height="13"><use href="#chk"/></svg>
<div class="t" style="left:1248px;top:670.5px;font-size:11px;color:#000;letter-spacing:-0.15px;">Set UID</div>
<div class="t" style="left:1067px;top:689.5px;font-size:11px;color:#000;letter-spacing:-0.15px;"><u>G</u>roup</div>
<svg class="a" style="left:1122px;top:691px" width="13" height="13"><use href="#chkd"/></svg>
<div class="t" style="left:1137px;top:690.5px;font-size:11px;color:#000;letter-spacing:-0.15px;">R</div>
<svg class="a" style="left:1159px;top:691px" width="13" height="13"><use href="#chk"/></svg>
<div class="t" style="left:1174px;top:690.5px;font-size:11px;color:#000;letter-spacing:-0.15px;">W</div>
<svg class="a" style="left:1196px;top:691px" width="13" height="13"><use href="#chk"/></svg>
<div class="t" style="left:1211px;top:690.5px;font-size:11px;color:#000;letter-spacing:-0.15px;">X</div>
<svg class="a" style="left:1233px;top:691px" width="13" height="13"><use href="#chk"/></svg>
<div class="t" style="left:1248px;top:690.5px;font-size:11px;color:#000;letter-spacing:-0.15px;">Set GID</div>
<div class="t" style="left:1067px;top:709.5px;font-size:11px;color:#000;letter-spacing:-0.15px;">Ot<u>h</u>ers</div>
<svg class="a" style="left:1122px;top:711px" width="13" height="13"><use href="#chkd"/></svg>
<div class="t" style="left:1137px;top:710.5px;font-size:11px;color:#000;letter-spacing:-0.15px;">R</div>
<svg class="a" style="left:1159px;top:711px" width="13" height="13"><use href="#chk"/></svg>
<div class="t" style="left:1174px;top:710.5px;font-size:11px;color:#000;letter-spacing:-0.15px;">W</div>
<svg class="a" style="left:1196px;top:711px" width="13" height="13"><use href="#chk"/></svg>
<div class="t" style="left:1211px;top:710.5px;font-size:11px;color:#000;letter-spacing:-0.15px;">X</div>
<svg class="a" style="left:1233px;top:711px" width="13" height="13"><use href="#chk"/></svg>
<div class="t" style="left:1248px;top:710.5px;font-size:11px;color:#000;letter-spacing:-0.15px;">Sticky bit</div>
<div class="t" style="left:1067px;top:732.5px;font-size:11px;color:#000;letter-spacing:-0.15px;">O<u>c</u>tal:</div>
<div class="a" style="left:1119px;top:731px;width:64px;height:20px;background:#fff;border:1px solid #7a7a7a;box-sizing:border-box;"></div>
<div class="t" style="left:1122px;top:732.5px;font-size:11px;color:#000;letter-spacing:-0.15px;">0644</div>
<svg class="a" style="left:1140px;top:565px" width="60" height="100"><path d="M29 7.2L49.2 49.2H39V92H18.4V49.2H8.7Z" fill="none" stroke="#e3151f" stroke-width="2.4" stroke-linejoin="miter"/></svg>
<div class="a" style="left:1071px;top:824px;width:73px;height:23px;background:#cccccc;border:1px solid #bfbfbf;box-sizing:border-box;"></div>
<div class="t" style="left:1071px;top:828.5px;font-size:11px;color:#8d8d8d;letter-spacing:-0.15px;width:73px;text-align:center">OK</div>
<div class="a" style="left:1159px;top:824px;width:73px;height:23px;background:#e1e1e1;border:1px solid #adadad;box-sizing:border-box;"></div>
<div class="t" style="left:1159px;top:828.5px;font-size:11px;color:#000;letter-spacing:-0.15px;width:73px;text-align:center">Cancel</div>
<div class="a" style="left:1247px;top:824px;width:73px;height:23px;background:#e1e1e1;border:1px solid #adadad;box-sizing:border-box;"></div>
<div class="t" style="left:1247px;top:828.5px;font-size:11px;color:#000;letter-spacing:-0.15px;width:73px;text-align:center"><u>H</u>elp</div>
</body></html>
